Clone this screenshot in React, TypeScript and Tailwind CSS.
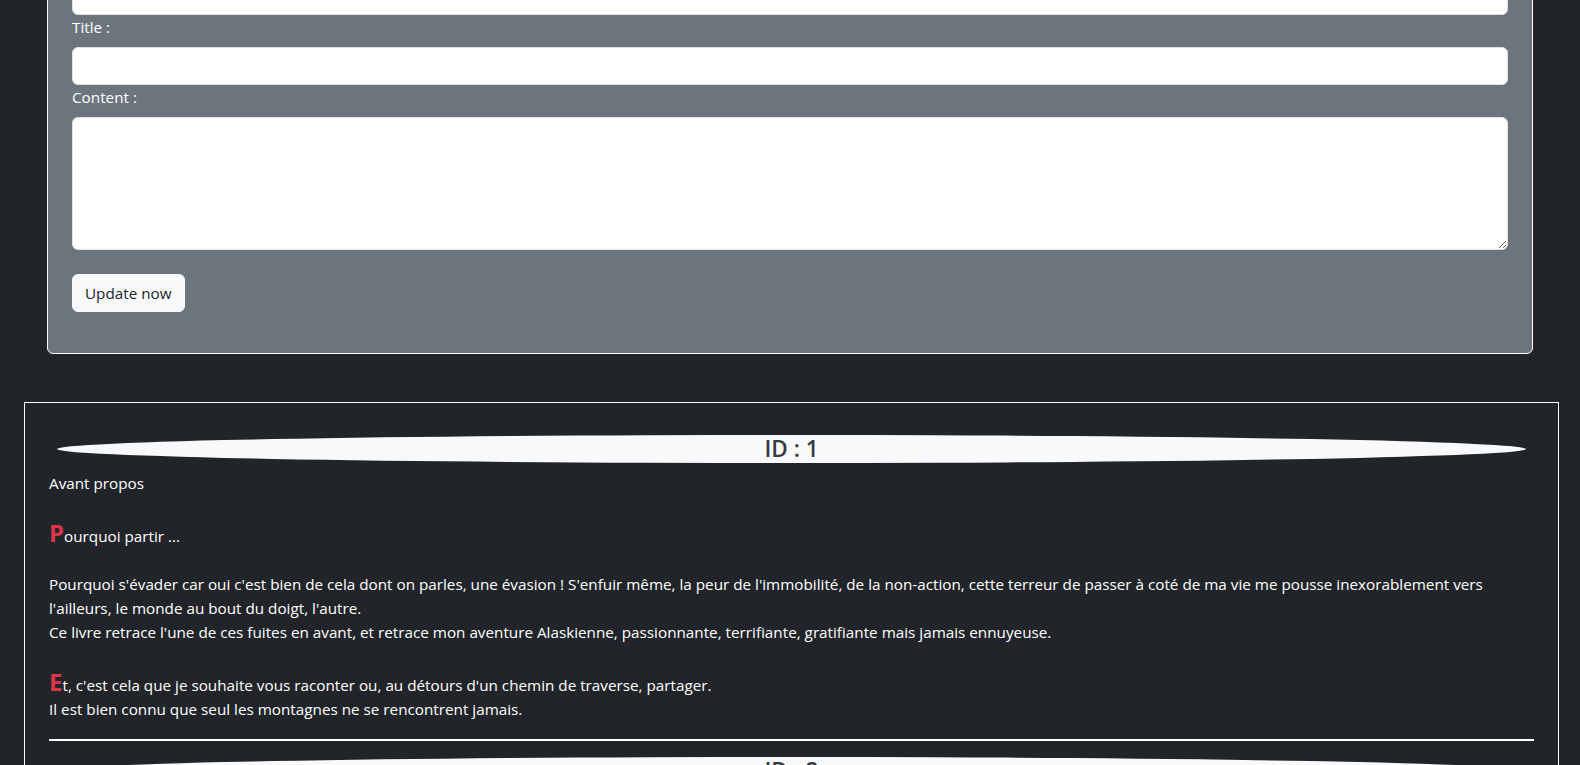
type Post = {
  id: number;
  title: string;
  intro: { letter: string; rest: string };
  body: string[];
  outro: { letter: string; rest: string; lines: string[] };
};

const posts: Post[] = [
  {
    id: 1,
    title: "Avant propos",
    intro: { letter: "P", rest: "ourquoi partir ..." },
    body: [
      "Pourquoi s'évader car oui c'est bien de cela dont on parles, une évasion ! S'enfuir même, la peur de l'immobilité, de la non-action, cette terreur de passer à coté de ma vie me pousse inexorablement vers l'ailleurs, le monde au bout du doigt, l'autre.",
      "Ce livre retrace l'une de ces fuites en avant, et retrace mon aventure Alaskienne, passionnante, terrifiante, gratifiante mais jamais ennuyeuse.",
    ],
    outro: {
      letter: "E",
      rest: "t, c'est cela que je souhaite vous raconter ou, au détours d'un chemin de traverse, partager.",
      lines: ["Il est bien connu que seul les montagnes ne se rencontrent jamais."],
    },
  },
  {
    id: 2,
    title: "Chapitre 1",
    intro: { letter: "L", rest: "e départ ..." },
    body: ["Tout commence un matin de juin, sac sur le dos et billet en poche."],
    outro: { letter: "A", rest: "nchorage, enfin.", lines: ["La route ne fait que commencer."] },
  },
];

function DropLetter({ letter }: { letter: string }) {
  return <span className="text-[24px] font-bold leading-[27px] text-[#dc3545]">{letter}</span>;
}

function PostEntry({ post }: { post: Post }) {
  return (
    <div>
      <h4 className="mx-2 mt-2 mb-2 h-7 rounded-[50%] bg-[#f8f9fa] text-center text-[22.5px] font-semibold leading-7 text-[#343a40]">
        ID : {post.id}
      </h4>
      <p>{post.title}</p>
      <p className="mt-6">
        <DropLetter letter={post.intro.letter} />
        {post.intro.rest}
      </p>
      <p className="mt-6">
        {post.body.map((line, i) => (
          <span key={i}>
            {i > 0 && <br />}
            {line}
          </span>
        ))}
      </p>
      <p className="mt-6">
        <DropLetter letter={post.outro.letter} />
        {post.outro.rest}
        {post.outro.lines.map((line, i) => (
          <span key={i}>
            <br />
            {line}
          </span>
        ))}
      </p>
      <hr className="mt-[18px] mb-4 border-0 border-t-2 border-white" />
    </div>
  );
}

export default function App() {
  return (
    <div className="min-h-screen overflow-hidden bg-[#212529] pb-10 font-['Open_Sans',sans-serif] text-[15.25px] leading-6 text-white">
      {/* Update form */}
      <div className="mx-auto -mt-[48px] w-[1486px] rounded-md border border-white bg-[#6c757d] px-6 pt-6 pb-[41px]">
        <input className="block h-[38px] w-full rounded-md border border-[#dee2e6] bg-white px-3 text-[#212529]" />
        <label className="mb-2 block">Title :</label>
        <input className="block h-[38px] w-full rounded-md border border-[#dee2e6] bg-white px-3 text-[#212529]" />
        <label className="mb-2 block">Content :</label>
        <textarea className="block h-[133px] w-full rounded-md border border-[#dee2e6] bg-white px-3 py-1.5 text-[#212529]" />
        <button className="mt-6 h-[38px] rounded-md border border-[#f8f9fa] bg-[#f8f9fa] px-3 text-[#212529]">
          Update now
        </button>
      </div>

      {/* Posts list */}
      <div className="mt-12 ml-6 w-[1535px] border border-white px-6 pt-6">
        {posts.map((post) => (
          <PostEntry key={post.id} post={post} />
        ))}
      </div>
    </div>
  );
}
